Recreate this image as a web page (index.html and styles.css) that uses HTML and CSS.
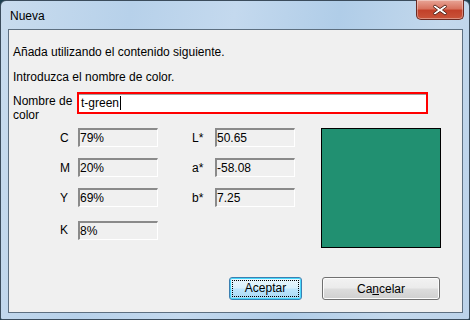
FILE: index.html
```html
<!DOCTYPE html>
<html lang="es">
<head>
    <meta charset="UTF-8">
    <title>Nueva</title>
    <link rel="stylesheet" href="styles.css">
</head>
<body>
    <div class="window">
        <div class="titlebar">
            <span class="title">Nueva</span>
            <span class="close-btn">
                <svg width="16" height="12" viewBox="0 0 16 12">
                    <path d="M3 1 L8 4.5 L13 1 L15 2.5 L10.5 6 L15 9.5 L13 11 L8 7.5 L3 11 L1 9.5 L5.5 6 L1 2.5 Z" fill="#fff" stroke="#5a2a20" stroke-width="1"/>
                </svg>
            </span>
        </div>
        <div class="client">
            <p class="intro">Añada utilizando el contenido siguiente.</p>
            <p class="intro second">Introduzca el nombre de color.</p>

            <div class="name-row">
                <label class="name-label" for="colorName">Nombre de<br>color</label>
                <div class="name-input"><span>t-green</span><span class="caret"></span></div>
            </div>

            <div class="values">
                <div class="fields">
                    <span class="lbl">C</span><span class="field">79%</span>
                    <span class="lbl lab">L*</span><span class="field">50.65</span>
                    <span class="lbl">M</span><span class="field">20%</span>
                    <span class="lbl lab">a*</span><span class="field">-58.08</span>
                    <span class="lbl">Y</span><span class="field">69%</span>
                    <span class="lbl lab">b*</span><span class="field">7.25</span>
                    <span class="lbl k">K</span><span class="field k">8%</span>
                </div>
                <div class="swatch"></div>
            </div>

            <div class="buttons">
                <button class="btn default"><span class="focus">Aceptar</span></button>
                <button class="btn cancel">Ca<u>n</u>celar</button>
            </div>
        </div>
    </div>
</body>
</html>
```

FILE: styles.css
```css
/* Reset */
* {
    margin: 0;
    padding: 0;
    box-sizing: border-box;
}

body {
    width: 470px;
    height: 320px;
    background: #1d3f4f;
    overflow: hidden;
    font-family: "Liberation Sans", Arial, sans-serif;
    font-size: 12px;
    color: #000;
}

/* Window frame */
.window {
    width: 470px;
    height: 320px;
    border: 1px solid #3b4c5c;
    border-radius: 6px 6px 2px 2px;
    background: linear-gradient(100deg, #c9dcee 0%, #b7d1ea 25%, #c4d9ee 45%, #b0cde8 65%, #c3d8ec 85%, #bcd3ea 100%);
    padding: 0 6px 6px 7px;
    display: flex;
    flex-direction: column;
}

.titlebar {
    height: 28px;
    display: flex;
    align-items: center;
    justify-content: space-between;
    position: relative;
}

.title {
    font-size: 12px;
    margin-left: 2px;
    margin-top: 2px;
}

.close-btn {
    position: absolute;
    top: -1px;
    right: -1px;
    width: 48px;
    height: 20px;
    border: 1px solid #6b2a22;
    border-top: none;
    border-radius: 0 0 5px 5px;
    background: linear-gradient(#e8a597 0%, #d8735f 45%, #c2412a 55%, #c9543a 100%);
    box-shadow: inset 0 0 0 1px rgba(255, 255, 255, 0.35);
    display: flex;
    align-items: center;
    justify-content: center;
}

/* Client area */
.client {
    flex: 1;
    background: #f0f0f0;
    border: 1px solid #5d6f80;
    padding: 15px 0 0 4px;
}

.intro {
    line-height: 14px;
}

.intro.second {
    margin-top: 11px;
}

.name-row {
    display: flex;
    height: 22px;
    margin-top: 8px;
}

.name-label {
    width: 64px;
    height: 22px;
    line-height: 14px;
    padding-top: 2px;
}

.name-input {
    width: 351px;
    height: 22px;
    background: #fff;
    border: 2px solid #f00;
    box-shadow: inset 0 1px 0 #a0a0a0;
    display: flex;
    align-items: center;
    padding-left: 2px;
    font-size: 12px;
}

.caret {
    width: 1px;
    height: 14px;
    background: #000;
    margin-left: 1px;
}

/* CMYK / Lab values */
.values {
    display: flex;
    margin-top: 14px;
}

.fields {
    display: grid;
    grid-template-columns: 65px 80px 57px 80px;
    grid-auto-rows: 19px;
    row-gap: 11px;
    align-items: center;
    align-content: start;
    width: 308px;
}

.lbl {
    padding-left: 47px;
}

.lbl.lab {
    padding-left: 34px;
}

.lbl.k,
.field.k {
    margin-top: 5px;
}

.field {
    height: 19px;
    border: 1px solid #fff;
    border-top: 2px solid #8a8a8a;
    border-left: 2px solid #8a8a8a;
    background: #f0f0f0;
    line-height: 16px;
    font-size: 12px;
}

.swatch {
    width: 120px;
    height: 120px;
    background: #219071;
    border: 1px solid #000;
}

/* Buttons */
.buttons {
    display: flex;
    gap: 20px;
    margin-top: 29px;
    padding-left: 216px;
}

.btn {
    height: 23px;
    font-family: "Liberation Sans", Arial, sans-serif;
    font-size: 12px;
    border: 1px solid #707070;
    border-radius: 3px;
    background: linear-gradient(#f2f2f2 0%, #ebebeb 48%, #dddddd 52%, #cfcfcf 100%);
    box-shadow: inset 0 0 0 1px #fcfcfc;
    color: #000;
}

.btn.default {
    width: 73px;
    border-color: #3c7fb1;
    background: linear-gradient(#eaf6fd 0%, #d9f0fc 48%, #bee6fd 52%, #a7d9f5 100%);
    box-shadow: inset 0 0 0 1px #48d8fb;
    padding: 2px;
}

.btn.default .focus {
    display: block;
    height: 100%;
    border: 1px dotted #000;
    line-height: 15px;
}

.btn.cancel {
    width: 118px;
}
```
